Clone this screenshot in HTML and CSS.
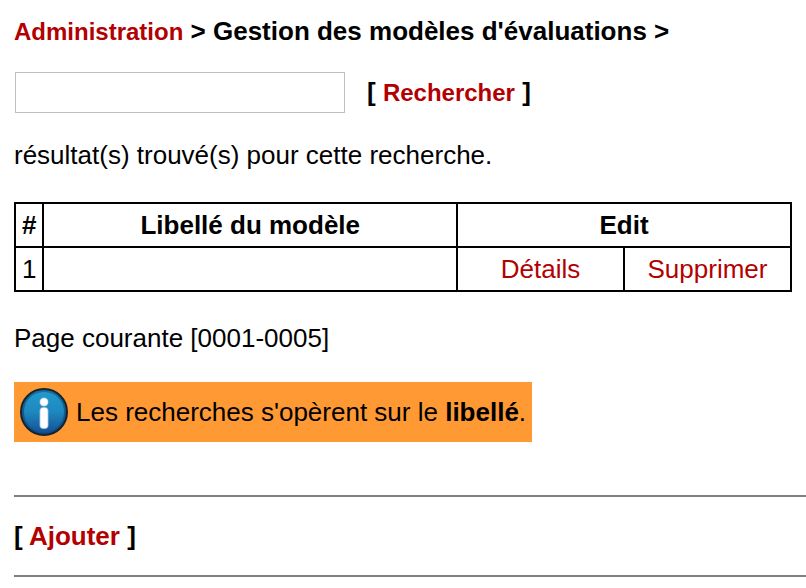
FILE: index.html
```html
<!DOCTYPE html>
<html lang="fr">
<head>
    <meta charset="UTF-8">
    <meta name="viewport" content="width=device-width, initial-scale=1.0">
    <title>Gestion des modèles d'évaluations</title>
    <link rel="stylesheet" href="styles.css">
</head>
<body>
    <h1 class="breadcrumb"><a href="#" class="small-link">Administration</a> &gt; Gestion des modèles d'évaluations &gt;</h1>

    <form class="search">
        <input type="text" id="search" name="search" class="search-input" aria-label="Rechercher">
        <div class="action">[ <a href="#" class="small-link">Rechercher</a> ]</div>
    </form>

    <p class="results">résultat(s) trouvé(s) pour cette recherche.</p>

    <table class="models">
        <thead>
            <tr>
                <th class="col-num">#</th>
                <th>Libellé du modèle</th>
                <th colspan="2">Edit</th>
            </tr>
        </thead>
        <tbody>
            <tr>
                <td class="col-num">1</td>
                <td></td>
                <td class="col-edit"><a href="#">Détails</a></td>
                <td class="col-edit"><a href="#">Supprimer</a></td>
            </tr>
        </tbody>
    </table>

    <p class="pages">Page courante [0001-0005]</p>

    <div class="info">
        <svg class="info-icon" viewBox="0 0 48 48" aria-hidden="true">
            <defs>
                <linearGradient id="rim" x1="0" y1="0" x2="0" y2="1">
                    <stop offset="0" stop-color="#176f9f"/>
                    <stop offset="1" stop-color="#124a85"/>
                </linearGradient>
                <linearGradient id="disc" x1="0" y1="0" x2="0" y2="1">
                    <stop offset="0" stop-color="#2299cc"/>
                    <stop offset="0.5" stop-color="#1d88bf"/>
                    <stop offset="1" stop-color="#155499"/>
                </linearGradient>
            </defs>
            <circle cx="24" cy="24" r="23" fill="url(#rim)" stroke="#14242e" stroke-width="2"/>
            <circle cx="24" cy="24" r="20" fill="url(#disc)"/>
            <circle cx="24" cy="14" r="4.5" fill="#8fc3e0"/>
            <circle cx="24" cy="14" r="3.8" fill="#fff"/>
            <rect x="19.5" y="19" width="9" height="22" rx="4" fill="#8fb6da"/>
            <rect x="20.3" y="19.8" width="7.4" height="20.4" rx="3.2" fill="#fff"/>
        </svg>
        <span>Les recherches s'opèrent sur le <b>libellé</b>.</span>
    </div>

    <hr>
    <div class="action">[ <a href="#">Ajouter</a> ]</div>
    <hr>
</body>
</html>
```
FILE: styles.css
```css
body {
    margin: 0;
    padding: 16px 0 0 14px;
    background-color: #fff;
    color: #000;
    font-family: "Liberation Sans", Arial, sans-serif;
    font-size: 26px;
    line-height: 30px;
}

a {
    color: #b30000;
    text-decoration: none;
}

a:hover {
    text-decoration: underline;
}

.small-link {
    font-size: 24px;
}

.breadcrumb {
    margin: 0 0 25px;
    font-size: 26px;
}

.search {
    display: flex;
    align-items: center;
    gap: 22px;
    margin-left: 1px;
}

.search-input {
    width: 330px;
    height: 41px;
    padding: 4px;
    border: 1px solid #bfbfbf;
    box-sizing: border-box;
    font: inherit;
}

.action {
    font-weight: bold;
}

.results {
    margin: 27px 0 32px;
}

.models {
    width: calc(100% - 14px);
    border-collapse: collapse;
}

.models th,
.models td {
    padding: 6px;
    border: 2px solid #000;
    text-align: center;
}

.models .col-num {
    width: 14px;
}

.models .col-edit {
    width: 153px;
}

.pages {
    margin: 31px 0 29px;
}

.info {
    display: flex;
    align-items: center;
    gap: 8px;
    width: fit-content;
    margin-bottom: 53px;
    padding: 6px;
    background-color: #ff9933;
}

.info-icon {
    width: 48px;
    height: 48px;
}

hr {
    margin: 24px 0;
    border: 0;
    border-top: 2px solid #808080;
}
```
